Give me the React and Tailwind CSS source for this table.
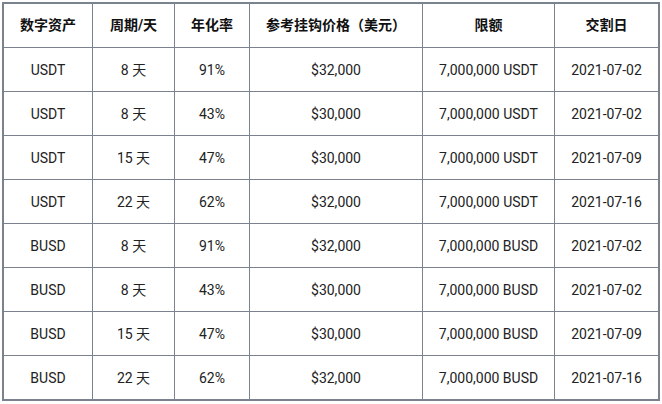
const headers = ["数字资产", "周期/天", "年化率", "参考挂钩价格（美元）", "限额", "交割日"];
const rows = [
  ["USDT", "8 天", "91%", "$32,000", "7,000,000 USDT", "2021-07-02"],
  ["USDT", "8 天", "43%", "$30,000", "7,000,000 USDT", "2021-07-02"],
  ["USDT", "15 天", "47%", "$30,000", "7,000,000 USDT", "2021-07-09"],
  ["USDT", "22 天", "62%", "$32,000", "7,000,000 USDT", "2021-07-16"],
  ["BUSD", "8 天", "91%", "$32,000", "7,000,000 BUSD", "2021-07-02"],
  ["BUSD", "8 天", "43%", "$30,000", "7,000,000 BUSD", "2021-07-02"],
  ["BUSD", "15 天", "47%", "$30,000", "7,000,000 BUSD", "2021-07-09"],
  ["BUSD", "22 天", "62%", "$32,000", "7,000,000 BUSD", "2021-07-16"],
];

export default function App() {
  return (
    <div className="w-[662px] h-[404px] bg-white pt-[2px] pl-[2px]">
      <div
        className="w-[658px] border-2 border-[#7a8290] grid grid-cols-[89px_82px_75px_173px_132px_103px] text-[14px]"
        style={{ fontFamily: 'Roboto, "Noto Sans CJK SC", sans-serif' }}
      >
        {headers.map((h, i) => (
          <div
            key={"h" + i}
            className={`h-[44px] flex items-center justify-center font-bold text-[#111] border-b border-[#7a8290] ${i < 5 ? "border-r" : ""}`}
          >
            {h}
          </div>
        ))}
        {rows.map((r, ri) =>
          r.map((c, ci) => (
            <div
              key={ri + "-" + ci}
              className={`${ri < 7 ? "h-[44px] border-b" : "h-[43px]"} ${ci < 5 ? "border-r" : ""} pt-[2px] border-[#7a8290] flex items-center justify-center text-[#222]`}
            >
              {c}
            </div>
          ))
        )}
      </div>
    </div>
  );
}
